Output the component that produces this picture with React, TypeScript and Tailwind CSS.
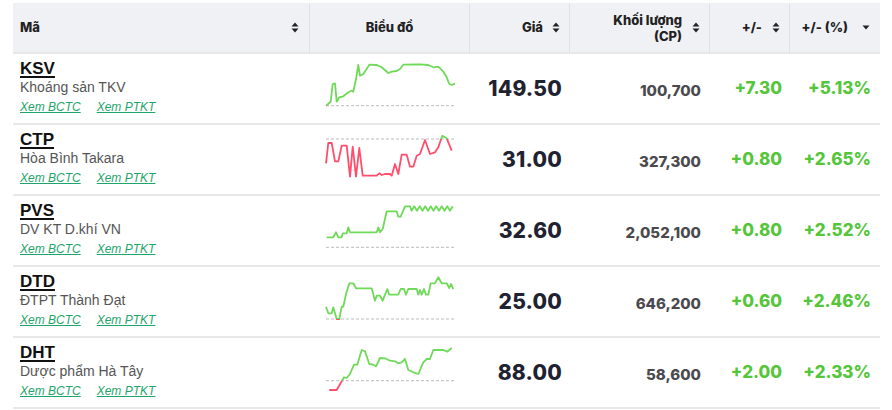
import { useId } from "react";

type Row = {
  code: string;
  name: string;
  price: string;
  volume: string;
  change: string;
  pct: string;
  base: number;
  pts: [number, number][];
};

const zigzag: [number, number][] = [];
for (let i = 0; i < 15; i++) {
  zigzag.push([86.5 + i * 2.75, i % 2 === 0 ? 6.7 : 2.3]);
}

const rows: Row[] = [
  {
    code: "KSV",
    name: "Khoáng sản TKV",
    price: "149.50",
    volume: "100,700",
    change: "+7.30",
    pct: "+5.13%",
    base: 43.7,
    pts: [
      [1, 43.7], [5.7, 39.7], [7.7, 22], [10, 21.3], [11.7, 39.7], [14.3, 35.3], [18.3, 34.3],
      [23.3, 30.3], [26.7, 28.7], [28.3, 29.7], [31, 17], [33.3, 3], [35, 13.7], [38.3, 12],
      [41.7, 7], [44.3, 2.7], [51.7, 3], [56.7, 5.3], [63.3, 11], [66.7, 9.7], [71.7, 9],
      [75, 7], [78.3, 2.7], [95, 2.3], [103.3, 3], [108.3, 5.3], [113.3, 4.7], [118.3, 9.7],
      [121.7, 15.3], [124.3, 22], [126.7, 23], [130, 21.7],
    ],
  },
  {
    code: "CTP",
    name: "Hòa Bình Takara",
    price: "31.00",
    volume: "327,300",
    change: "+0.80",
    pct: "+2.65%",
    base: 6,
    pts: [
      [1, 30.3], [3.3, 10], [6.7, 10], [10, 28.3], [13.3, 28.3], [16.7, 12.7], [21.7, 12.7],
      [25, 43.7], [27.7, 13.7], [31, 43.7], [34.3, 15], [37.7, 42.7], [51.7, 42.7], [54.3, 40.3],
      [56.7, 42], [60, 41], [65, 41], [66.7, 42.7], [70, 31], [73.3, 41], [76.7, 21.7],
      [81.7, 21.7], [85, 33.7], [88.3, 33.7], [91.7, 22.7], [95, 21], [100, 7], [105, 21],
      [110, 19.3], [113.3, 14.3], [117.3, 2.7], [121.7, 5.3], [126.7, 17.7],
    ],
  },
  {
    code: "PVS",
    name: "DV KT D.khí VN",
    price: "32.60",
    volume: "2,052,100",
    change: "+0.80",
    pct: "+2.52%",
    base: 43.3,
    pts: [
      [1.7, 33.3], [8.3, 33.3], [11, 28.3], [13.3, 33.3], [16.7, 33.3], [17.7, 29.3], [21.7, 29.3],
      [23.3, 23.3], [25, 28.3], [51.7, 28.3], [53.3, 23.3], [55, 28.3], [57.7, 25], [61.7, 7.3],
      [71.7, 7.3], [73.3, 12.7], [75.7, 12.7], [80, 2.3], [85, 2.3],
      ...zigzag,
      [127.7, 2.3],
    ],
  },
  {
    code: "DTD",
    name: "ĐTPT Thành Đạt",
    price: "25.00",
    volume: "646,200",
    change: "+0.60",
    pct: "+2.46%",
    base: 44,
    pts: [
      [1, 31.7], [3.3, 38.3], [6.7, 38.3], [8.3, 32.3], [11.7, 44], [14.3, 44], [16.7, 31.7],
      [18.3, 31.7], [21, 19], [24.3, 8.3], [28.3, 8.3], [31, 13.3], [46.7, 13.3], [50, 25.7],
      [51.7, 20.7], [55, 20.7], [57.7, 25.7], [62.3, 14], [64.3, 19.7], [73.3, 19.7], [75.7, 14],
      [79, 14], [81, 19.7], [83.3, 14], [91.7, 14], [93.3, 19.7], [95, 15], [96.7, 19.7],
      [99, 14], [101, 19.7], [103.3, 19.7], [105.7, 8.3], [110, 8.3], [113.3, 2.3], [116.7, 8.3],
      [121.7, 8.3], [124.3, 13], [126, 9], [128.3, 14],
    ],
  },
  {
    code: "DHT",
    name: "Dược phẩm Hà Tây",
    price: "88.00",
    volume: "58,600",
    change: "+2.00",
    pct: "+2.33%",
    base: 34.7,
    pts: [
      [4.3, 44], [11.7, 44], [16.7, 35.3], [19, 31.3], [21.7, 32], [25, 28], [29, 18.7],
      [32.3, 18.7], [36.7, 4], [40, 5.3], [44.3, 18], [48.3, 18.7], [51, 20.3], [55, 12],
      [60, 12.3], [65, 14.7], [70, 15.3], [73.3, 17.3], [76.7, 16.3], [80, 13], [83.3, 24],
      [88.3, 26.3], [93.3, 28], [98.3, 16.3], [101.7, 13], [105, 13], [108.3, 4], [118.3, 4],
      [122.3, 5.7], [126.7, 2],
    ],
  },
];

function SortIcon() {
  return (
    <svg width="8" height="11" viewBox="0 0 8 11" className="shrink-0">
      <path d="M4 0.5 L7.5 4.5 H0.5 Z" fill="#222" />
      <path d="M4 10.5 L7.5 6.5 H0.5 Z" fill="#222" />
    </svg>
  );
}

function DownIcon() {
  return (
    <svg width="8" height="5" viewBox="0 0 8 5" className="shrink-0">
      <path d="M0.5 0.5 H7.5 L4 4.5 Z" fill="#222" />
    </svg>
  );
}

function Spark({ pts, base }: { pts: [number, number][]; base: number }) {
  const id = useId().replace(/:/g, "");
  const line = pts.map((p) => p.join(",")).join(" ");
  return (
    <svg width="132" height="50" viewBox="0 0 132 50" className="overflow-visible">
      <defs>
        <clipPath id={`up${id}`}>
          <rect x="-2" y="-5" width="136" height={base + 5} />
        </clipPath>
        <clipPath id={`dn${id}`}>
          <rect x="-2" y={base} width="136" height={55 - base} />
        </clipPath>
      </defs>
      <line x1="1" y1={base} x2="130" y2={base} stroke="#bbb" strokeWidth="1" strokeDasharray="3 2" />
      <polyline points={line} fill="none" stroke="#6fd95a" strokeWidth="1.8" strokeLinejoin="round" clipPath={`url(#up${id})`} />
      <polyline points={line} fill="none" stroke="#ff4d6b" strokeWidth="1.8" strokeLinejoin="round" clipPath={`url(#dn${id})`} />
    </svg>
  );
}

export default function App() {
  return (
    <div className="w-[892px] h-[410px] bg-white overflow-hidden pt-[3px] pl-[13px]">
      <div className="w-[867px] border-b-2 border-[#e8e8e8]">
        {/* header */}
        <div
          className="grid grid-cols-[297px_160px_100px_140px_80px_90px] h-[49px] bg-[#f0f1f5] text-[13px] font-extrabold text-[#222]"
          style={{ fontFamily: "Inter, 'Noto Sans', sans-serif" }}
        >
          <div className="flex items-center justify-between pl-[7px] pr-[10px] border-r border-[#e0e1e6]">
            <span>Mã</span>
            <SortIcon />
          </div>
          <div className="flex items-center justify-center border-r border-[#e0e1e6]">Biểu đồ</div>
          <div className="flex items-center justify-end gap-[9px] pr-[9px] border-r border-[#e0e1e6]">
            <span>Giá</span>
            <SortIcon />
          </div>
          <div className="flex items-center justify-end gap-[10px] pr-[9px] border-r border-[#e0e1e6]">
            <span className="text-right leading-[16px]">
              Khối lượng
              <br />
              (CP)
            </span>
            <SortIcon />
          </div>
          <div className="flex items-center justify-end gap-[10px] pr-[9px] border-r border-[#e0e1e6]">
            <span>+/-</span>
            <SortIcon />
          </div>
          <div className="flex items-center justify-end gap-[14px] pr-[10px]">
            <span>+/- (%)</span>
            <DownIcon />
          </div>
        </div>

        {/* rows */}
        {rows.map((r) => (
          <div
            key={r.code}
            className="grid grid-cols-[297px_160px_100px_140px_80px_90px] h-[71px] border-t-2 border-[#e8e8e8]"
          >
            <div className="flex flex-col pl-[7px] pt-[5px]" style={{ fontFamily: "'Liberation Sans', Arial, sans-serif" }}>
              <span className="text-[17px] font-bold leading-[20px] text-[#111] underline underline-offset-2 decoration-2 w-fit">
                {r.code}
              </span>
              <span className="text-[14px] leading-[17px] text-[#555]">{r.name}</span>
              <div className="flex gap-[16px] mt-[4px] text-[12px] italic text-[#1ea56b] leading-[14px]">
                <span className="underline">Xem BCTC</span>
                <span className="underline">Xem PTKT</span>
              </div>
            </div>
            <div className="flex items-start pl-[15px] pt-[8px]">
              <Spark pts={r.pts} base={r.base} />
            </div>
            <div
              className="flex items-center justify-end pr-[8px] text-[21px] font-extrabold text-[#1f2230] tracking-[0.2px]"
              style={{ fontFamily: "Inter, 'Noto Sans', sans-serif" }}
            >
              {r.price}
            </div>
            <div
              className="flex items-center justify-end pr-[9px] pt-[6px] text-[15px] font-extrabold text-[#4a4a4e]"
              style={{ fontFamily: "Inter, 'Noto Sans', sans-serif" }}
            >
              {r.volume}
            </div>
            <div
              className="flex items-center justify-end pr-[8px] text-[17px] font-extrabold text-[#55c63a]"
              style={{ fontFamily: "Inter, 'Noto Sans', sans-serif" }}
            >
              {r.change}
            </div>
            <div
              className="flex items-center justify-end pr-[9px] text-[17px] font-extrabold text-[#55c63a]"
              style={{ fontFamily: "Inter, 'Noto Sans', sans-serif" }}
            >
              {r.pct}
            </div>
          </div>
        ))}
      </div>
    </div>
  );
}
